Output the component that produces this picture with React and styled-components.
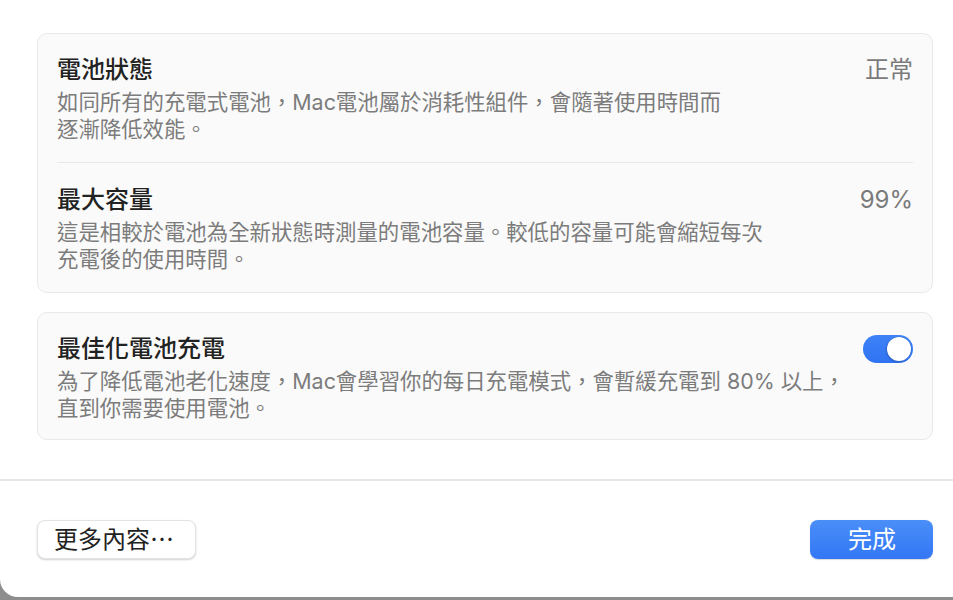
import React from "react";
import styled, { createGlobalStyle } from "styled-components";

const Global = createGlobalStyle`
  html, body { margin: 0; padding: 0; background: #8d8d8d; }
  body {
    font-family: "Inter", "Noto Sans CJK TC", "Noto Sans", sans-serif;
    -webkit-font-smoothing: antialiased;
  }
  * { box-sizing: border-box; }
`;

const Window = styled.div`
  width: 953px;
  height: 597px;
  background: #ffffff;
  border-bottom-left-radius: 18px;
  display: flex;
  flex-direction: column;
  overflow: hidden;
`;

const Content = styled.div`
  height: 479px;
  padding: 33px 20px 0 37px;
  display: flex;
  flex-direction: column;
  gap: 19px;
`;

const Card = styled.div`
  background: #fafafa;
  border: 1px solid #e9e9e9;
  border-radius: 10px;
  display: flex;
  flex-direction: column;
`;

const Row = styled.div`
  display: flex;
  align-items: flex-start;
  justify-content: space-between;
  padding: ${(p) => p.$pt || 21}px 19px ${(p) => p.$pb || 19}px 19px;
`;

const Text = styled.div`
  display: flex;
  flex-direction: column;
  gap: 4px;
`;

const Title = styled.div`
  font-size: 24px;
  line-height: 30px;
  font-weight: 500;
  color: #222222;
`;

const Desc = styled.div`
  font-size: 21.4px;
  line-height: 27px;
  color: #7c7c7c;
`;

const Value = styled.div`
  font-size: 24px;
  line-height: 30px;
  color: #7a7a7a;
`;

const Divider = styled.div`
  height: 1px;
  margin: 0 19px;
  background: #e8e8e8;
`;

const Toggle = styled.div`
  width: 50px;
  height: 28px;
  margin-top: 1px;
  border-radius: 14px;
  background: linear-gradient(180deg, #3f82f7 0%, #2f73f2 100%);
  display: flex;
  align-items: center;
  justify-content: flex-end;
  padding: 2px;
  flex-shrink: 0;
`;

const Knob = styled.div`
  width: 24px;
  height: 24px;
  border-radius: 50%;
  background: #ffffff;
  box-shadow: 0 0 1px rgba(0, 0, 0, 0.3), -1px 1px 2px rgba(0, 0, 0, 0.15);
`;

const Separator = styled.div`
  height: 2px;
  background: #e6e6e6;
`;

const Footer = styled.div`
  flex: 1;
  display: flex;
  align-items: flex-start;
  justify-content: space-between;
  padding: 39px 20px 0 37px;
`;

const Button = styled.button`
  height: 39px;
  border-radius: 8px;
  font-family: inherit;
  font-size: 24px;
  line-height: 30px;
  padding: ${(p) => (p.$primary ? "0 37px 0 38px" : "0 21px 0 16px")};
  border: ${(p) => (p.$primary ? "none" : "1px solid #e3e3e3")};
  color: ${(p) => (p.$primary ? "#ffffff" : "#222222")};
  background: ${(p) =>
    p.$primary
      ? "linear-gradient(180deg, #4a8ef8 0%, #3377f5 100%)"
      : "#ffffff"};
  box-shadow: ${(p) =>
    p.$primary
      ? "0 0.5px 1px rgba(0,0,0,0.15)"
      : "0 1px 2px rgba(0,0,0,0.18)"};
  display: flex;
  align-items: center;
  cursor: default;
`;

export default function App() {
  return (
    <>
      <Global />
      <Window>
        <Content>
          <Card>
            <Row>
              <Text>
                <Title>電池狀態</Title>
                <Desc>
                  如同所有的充電式電池，Mac電池屬於消耗性組件，會隨著使用時間而
                  <br />
                  逐漸降低效能。
                </Desc>
              </Text>
              <Value>正常</Value>
            </Row>
            <Divider />
            <Row $pt={22}>
              <Text>
                <Title>最大容量</Title>
                <Desc>
                  這是相較於電池為全新狀態時測量的電池容量。較低的容量可能會縮短每次
                  <br />
                  充電後的使用時間。
                </Desc>
              </Text>
              <Value>99%</Value>
            </Row>
          </Card>
          <Card>
            <Row $pb={17}>
              <Text>
                <Title>最佳化電池充電</Title>
                <Desc>
                  為了降低電池老化速度，Mac會學習你的每日充電模式，會暫緩充電到 80% 以上，
                  <br />
                  直到你需要使用電池。
                </Desc>
              </Text>
              <Toggle>
                <Knob />
              </Toggle>
            </Row>
          </Card>
        </Content>
        <Separator />
        <Footer>
          <Button>更多內容⋯</Button>
          <Button $primary>完成</Button>
        </Footer>
      </Window>
    </>
  );
}
